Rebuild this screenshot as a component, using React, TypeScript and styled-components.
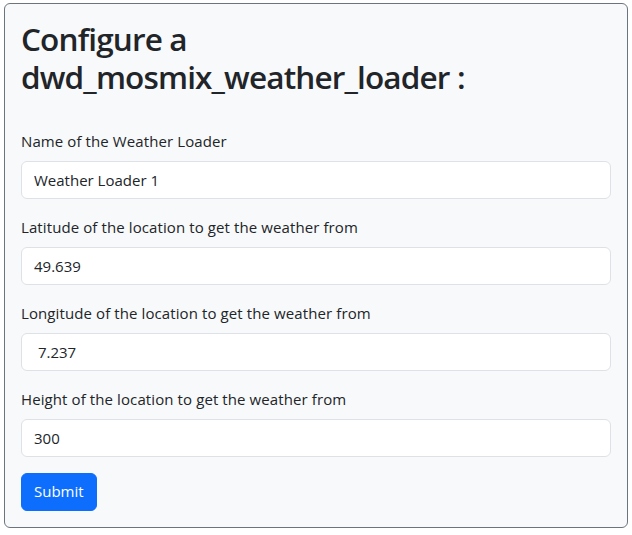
import React from "react"
import styled, { createGlobalStyle } from "styled-components"

const GlobalStyle = createGlobalStyle`
  * { box-sizing: border-box; }
  body {
    margin: 0;
    background: #fff;
    color: #212529;
    font-family: "Open Sans", "Noto Sans", "Liberation Sans", sans-serif;
    font-size: 16px;
    line-height: 1.5;
  }
`

const Page = styled.div`
  padding: 3px 4px;
`

const Card = styled.form`
  display: flex;
  flex-direction: column;
  background: #f8f9fa;
  border: 1px solid #6c757d;
  border-radius: 6px;
  padding: 16px;
`

const Title = styled.h1`
  margin: 0 0 33px;
  font-size: 31.5px;
  font-weight: 600;
  line-height: 1.2;
  letter-spacing: -0.85px;
`

const Field = styled.div`
  display: flex;
  flex-direction: column;
  margin-bottom: 16px;
`

const Label = styled.label`
  margin-bottom: 8px;
  font-size: 15px;
  line-height: 24px;
  letter-spacing: 0.1px;
`

const Input = styled.input`
  display: block;
  width: 100%;
  height: 38px;
  padding: 6px 12px;
  font-family: inherit;
  font-size: 15px;
  line-height: 1.5;
  color: #212529;
  background: #fff;
  border: 1px solid #dee2e6;
  border-radius: 6px;
  outline: none;
`

const SubmitButton = styled.button`
  align-self: flex-start;
  height: 38px;
  padding: 6px 12px;
  font-family: inherit;
  font-size: 15px;
  line-height: 1.5;
  color: #fff;
  background: #0d6efd;
  border: 1px solid #0d6efd;
  border-radius: 6px;
  cursor: pointer;
`

const fields = [
  { id: "name", label: "Name of the Weather Loader", value: "Weather Loader 1" },
  { id: "lat", label: "Latitude of the location to get the weather from", value: "49.639" },
  { id: "lon", label: "Longitude of the location to get the weather from", value: " 7.237" },
  { id: "height", label: "Height of the location to get the weather from", value: "300" },
]

export default function App() {
  return (
    <Page>
      <GlobalStyle />
      <Card onSubmit={e => e.preventDefault()}>
        <Title>Configure a dwd_mosmix_weather_loader :</Title>
        {fields.map(f => (
          <Field key={f.id}>
            <Label htmlFor={f.id}>{f.label}</Label>
            <Input id={f.id} type="text" defaultValue={f.value} />
          </Field>
        ))}
        <SubmitButton type="submit">Submit</SubmitButton>
      </Card>
    </Page>
  )
}
